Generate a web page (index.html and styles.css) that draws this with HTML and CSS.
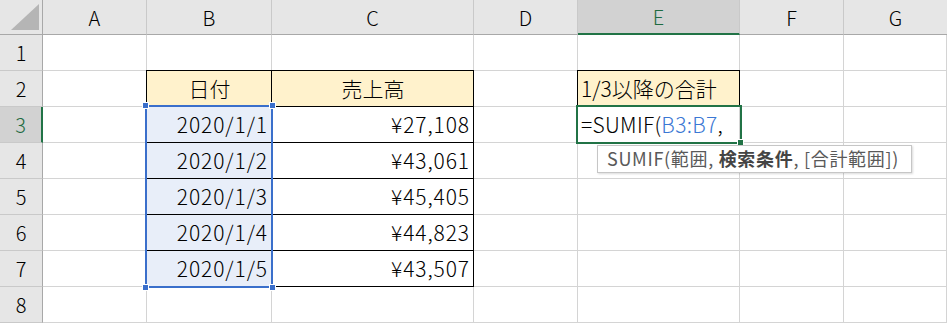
FILE: index.html
```html
<!DOCTYPE html>
<html lang="ja">
<head>
    <meta charset="UTF-8">
    <meta name="viewport" content="width=device-width, initial-scale=1.0">
    <title>SUMIF</title>
    <link rel="stylesheet" href="styles.css">
</head>
<body>
    <div class="sheet">
        <div class="cells">
            <!-- column headers -->
            <div class="hd corner"><span class="tri"></span></div>
            <div class="hd col">A</div>
            <div class="hd col">B</div>
            <div class="hd col">C</div>
            <div class="hd col">D</div>
            <div class="hd col active-col">E</div>
            <div class="hd col">F</div>
            <div class="hd col last">G</div>

            <!-- row 1 -->
            <div class="hd row">1</div>
            <div class="c"></div><div class="c"></div><div class="c"></div><div class="c"></div><div class="c"></div><div class="c"></div><div class="c"></div>

            <!-- row 2 -->
            <div class="hd row">2</div>
            <div class="c"></div>
            <div class="c tb head l t center">日付</div>
            <div class="c tb head t center">売上高</div>
            <div class="c"></div>
            <div class="c tb head l t left">1/3以降の合計</div>
            <div class="c"></div>
            <div class="c"></div>

            <!-- row 3 -->
            <div class="hd row active-row">3</div>
            <div class="c"></div>
            <div class="c tb sel l right num">2020/1/1</div>
            <div class="c tb right num">¥27,108</div>
            <div class="c"></div>
            <div class="c left formula">=SUMIF(<span class="ref">B3:B7</span>,</div>
            <div class="c"></div>
            <div class="c"></div>

            <!-- row 4 -->
            <div class="hd row">4</div>
            <div class="c"></div>
            <div class="c tb sel l right num">2020/1/2</div>
            <div class="c tb right num">¥43,061</div>
            <div class="c"></div><div class="c"></div><div class="c"></div><div class="c"></div>

            <!-- row 5 -->
            <div class="hd row">5</div>
            <div class="c"></div>
            <div class="c tb sel l right num">2020/1/3</div>
            <div class="c tb right num">¥45,405</div>
            <div class="c"></div><div class="c"></div><div class="c"></div><div class="c"></div>

            <!-- row 6 -->
            <div class="hd row">6</div>
            <div class="c"></div>
            <div class="c tb sel l right num">2020/1/4</div>
            <div class="c tb right num">¥44,823</div>
            <div class="c"></div><div class="c"></div><div class="c"></div><div class="c"></div>

            <!-- row 7 -->
            <div class="hd row">7</div>
            <div class="c"></div>
            <div class="c tb sel l right num">2020/1/5</div>
            <div class="c tb right num">¥43,507</div>
            <div class="c"></div><div class="c"></div><div class="c"></div><div class="c"></div>

            <!-- row 8 -->
            <div class="hd row">8</div>
            <div class="c"></div><div class="c"></div><div class="c"></div><div class="c"></div><div class="c"></div><div class="c"></div><div class="c"></div>
        </div>

        <!-- selection marks, same grid laid over the cells -->
        <div class="marks">
            <div class="range">
                <span class="knob k1"></span><span class="knob k2"></span>
                <span class="knob k3"></span><span class="knob k4"></span>
            </div>
            <div class="cursor"><span class="fill"></span></div>
        </div>

        <div class="tip">SUMIF(範囲, <b>検索条件</b>, [合計範囲])</div>
    </div>
</body>
</html>
```

FILE: styles.css
```css
body{
    margin: 0;
    background: #fff;
    font-family: "Noto Sans CJK JP", "Noto Sans", sans-serif;
    font-weight: 300;
    color: #000;
}
.sheet{
    position: relative;
    display: grid;
    width: 947px;
    overflow: hidden;
}
.cells,.marks{
    grid-area: 1 / 1;
    display: grid;
    grid-template-columns: 43px 104px 125px 202px 104px 162px 104px 103px;
    grid-template-rows: 35px repeat(8, 36px);
}
.marks{
    pointer-events: none;
}
.cells>div,.marks>div{
    box-sizing: border-box;
}
/* headers */
.hd{
    background: #e6e6e6;
    font-size: 20px;
    display: flex;
    align-items: center;
    justify-content: center;
    border-right: 1px solid #c9c9c9;
    border-bottom: 1px solid #c9c9c9;
}
.hd.col{
    border-bottom: 1px solid #a8a8a8;
}
.hd.row{
    border-right: 1px solid #a8a8a8;
}
.hd.last{
    border-right: none;
}
.corner{
    border-right: 1px solid #a8a8a8 !important;
    border-bottom: 1px solid #a8a8a8 !important;
    align-items: flex-end !important;
    justify-content: flex-end !important;
    padding: 0 3px 4px 0;
}
.tri{
    width: 28px;
    height: 26px;
    background: #b5b5b5;
    clip-path: polygon(100% 0, 100% 100%, 0 100%);
}
.active-col{
    background: #d2d2d2;
    color: #1e6b41;
    border-bottom: 2px solid #217346 !important;
}
.active-row{
    background: #d2d2d2;
    color: #1e6b41;
    border-right: 2px solid #217346 !important;
}
/* cells */
.c{
    font-size: 21px;
    display: flex;
    align-items: center;
    padding: 0 3px 1px 4px;
    white-space: nowrap;
    border-right: 1px solid #d4d4d4;
    border-bottom: 1px solid #d4d4d4;
}
.c.center{ justify-content: center; }
.c.right{ justify-content: flex-end; }
.c.left{ justify-content: flex-start; padding-left: 3px; }
.num{
    letter-spacing: 0.9px;
}
.tb{
    border-right: 1px solid #000;
    border-bottom: 1px solid #000;
}
.tb.l{ box-shadow: -1px 0 0 #000; }
.tb.t{ box-shadow: 0 -1px 0 #000; }
.tb.l.t{ box-shadow: -1px 0 0 #000, 0 -1px 0 #000, -1px -1px 0 #000; }
.head{
    background: #fff2cc;
}
.sel{
    background: #e8eef9;
}
.formula{
    overflow: visible;
    padding-left: 5px;
    letter-spacing: 0.3px;
}
.ref{
    color: #3b78d4;
}
/* overlays */
.range{
    grid-column: 3;
    grid-row: 4 / 9;
    margin: -2px -1px -1px -2px;
    border: 2px solid #3a6fcb;
    position: relative;
}
.knob{
    position: absolute;
    width: 5px;
    height: 5px;
    background: #3a6fcb;
    border: 1px solid #fff;
}
.k1{ left: -5px; top: -5px; }
.k2{ right: -5px; top: -5px; }
.k3{ left: -5px; bottom: -5px; }
.k4{ right: -5px; bottom: -5px; }
.cursor{
    grid-column: 6;
    grid-row: 4;
    margin: -2px -2px -1px -2px;
    border: 2px solid #217346;
    position: relative;
}
.fill{
    position: absolute;
    right: -4px;
    bottom: -4px;
    width: 5px;
    height: 5px;
    background: #217346;
    border: 1px solid #fff;
}
.tip{
    position: absolute;
    left: 597px;
    top: 145px;
    width: 315px;
    height: 28px;
    box-sizing: border-box;
    background: #fff;
    border: 1px solid #c6c6c6;
    box-shadow: 1px 1px 2px rgba(0,0,0,0.15);
    font-size: 18px;
    font-weight: 400;
    color: #595959;
    padding: 0 0 0 9px;
    line-height: 25px;
    letter-spacing: 0.7px;
    white-space: nowrap;
}
.tip b{
    color: #444;
    font-weight: 700;
}
```
